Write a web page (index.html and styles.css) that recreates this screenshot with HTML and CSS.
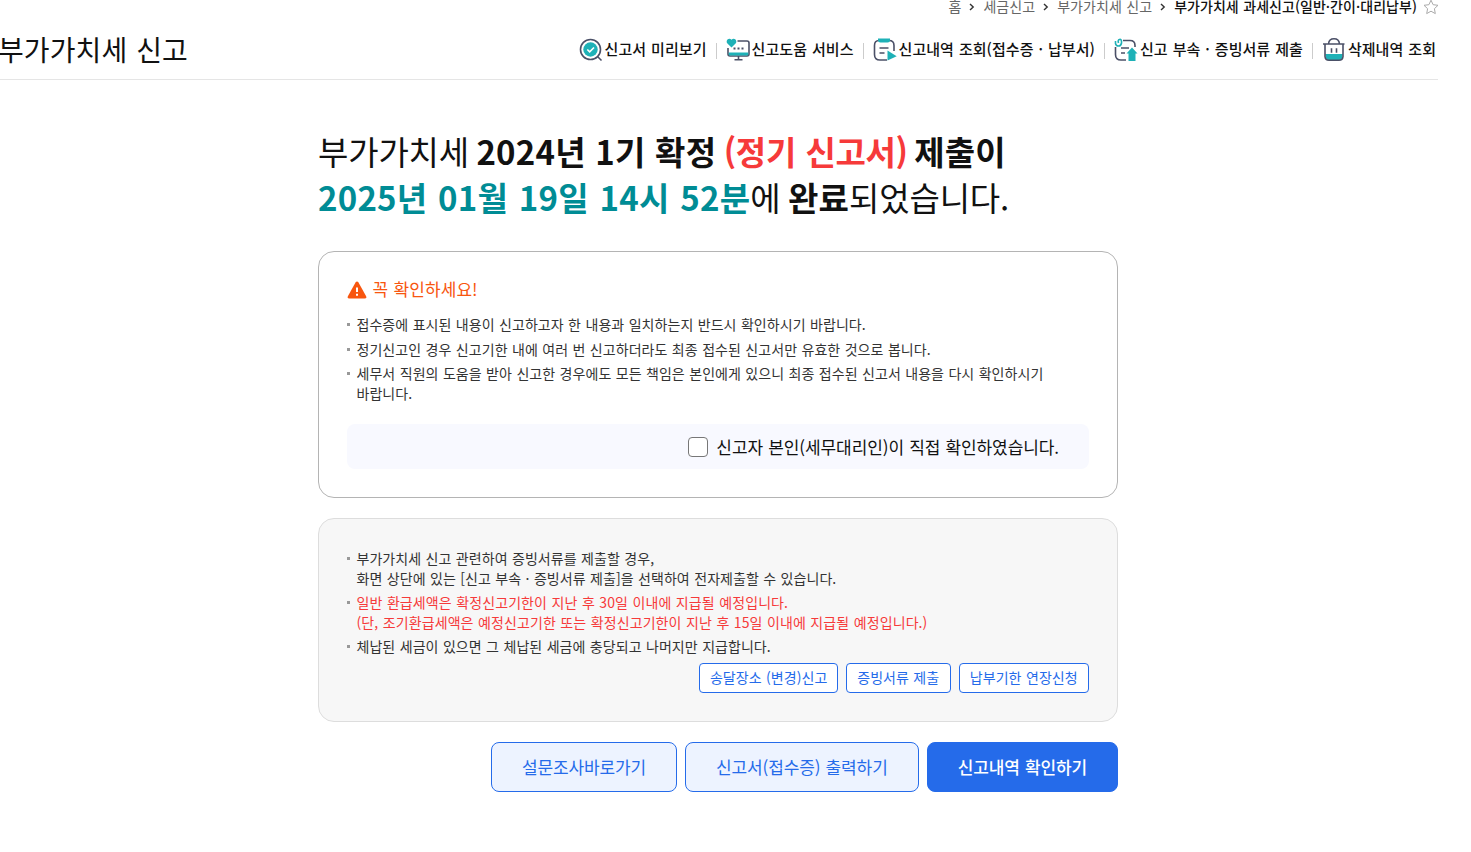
FILE: index.html
```html
<!DOCTYPE html>
<html lang="ko">
<head>
    <meta charset="UTF-8">
    <meta name="viewport" content="width=device-width, initial-scale=1.0">
    <title>부가가치세 신고</title>
    <link rel="stylesheet" href="styles.css">
</head>
<body>
    <header>
        <nav class="breadcrumb">
            <span>홈</span>
            <svg class="chevron" viewBox="0 0 6 8"><path d="M1 1l3.2 3L1 7"/></svg>
            <span>세금신고</span>
            <svg class="chevron" viewBox="0 0 6 8"><path d="M1 1l3.2 3L1 7"/></svg>
            <span>부가가치세 신고</span>
            <svg class="chevron" viewBox="0 0 6 8"><path d="M1 1l3.2 3L1 7"/></svg>
            <strong>부가가치세 과세신고(일반·간이·대리납부)</strong>
            <svg class="star" viewBox="0 0 16 16"><path d="M8 1.2l2.1 4.500 4.900.6-3.600 3.400.9 4.900L8 12.200l-4.300 2.400.9-4.900L1 6.300l4.900-.6z"/></svg>
        </nav>
        <div class="title-bar">
            <h1>부가가치세 신고</h1>
            <ul class="menu">
                <li>
                    <svg viewBox="0 0 24 24">
                        <circle class="line" cx="11.500" cy="11.500" r="10"/>
                        <path class="line" d="M18.500 18.500l4 4"/>
                        <circle class="fill" cx="11.500" cy="11.500" r="7.200"/>
                        <path class="check" d="M8.300 11.500l2.400 2.400 4.300-4.400"/>
                    </svg>
                    <span>신고서 미리보기</span>
                </li>
                <li>
                    <svg viewBox="0 0 24 24">
                        <path class="line" d="M11.500 3H21q2 0 2 2v11q0 2-2 2H4q-2 0-2-2v-6M12.500 18v3.500M8.500 21.700h8"/>
                        <path class="fill" d="M2.700 14.500h19.600v2.500q0 .4-.8.4h-18q-.8 0-.8-.4z"/>
                        <path class="fill" d="M5.500 9.500L1.200 5.200C-.7 2.700 2.800-.9 5.500 1.700 8.200-.9 11.700 2.700 9.800 5.200z"/>
                        <path class="dots" d="M7.500 10.500h2M11.500 10.500h2M15.500 10.500h2"/>
                    </svg>
                    <span>신고도움 서비스</span>
                </li>
                <li>
                    <svg viewBox="0 0 24 24">
                        <path class="line" d="M14 22H7q-5.500 0-5.500-5.500v-9Q1.500 2.500 6 2.500h10q5 0 5 5V13"/>
                        <path class="fill" d="M5 .5h12V2q0 2.500-2.500 2.500h-7Q5 4.500 5 2z"/>
                        <path class="line" d="M6.500 10h9M6.500 15h5"/>
                        <path class="fill" d="M14.500 12.500L23.700 18.300 14.500 22.500z"/>
                    </svg>
                    <span>신고내역 조회(접수증 · 납부서)</span>
                </li>
                <li>
                    <svg viewBox="0 0 24 24">
                        <path class="line" d="M12 22H7q-5.500 0-5.500-5.500V9M9 2.500h7q5 0 5 5V9M7 10h8M7 15h4"/>
                        <path class="clip" d="M1.500 3v2.500Q2 8 4.500 8T7.500 5V3.500Q7.500 1 5.500 1.500T4.500 5"/>
                        <path class="fill" d="M18 9.500L23.500 15.500H21.500V23h-7v-7.500H12.500z"/>
                    </svg>
                    <span>신고 부속 · 증빙서류 제출</span>
                </li>
                <li>
                    <svg viewBox="0 0 24 24">
                        <path class="fill" d="M3.200 16h17.600l-.7 4q-.3 2-2.600 2h-11q-2.300 0-2.600-2z"/>
                        <path class="line" d="M1 6h21.500M6.500 6Q7 .8 12 .8T17.500 6M3 6v12.500Q3.300 22.300 7 22.300h10q3.700 0 4-3.800V6M9.500 10.300v4.500M14.500 10.300v4.500"/>
                    </svg>
                    <span>삭제내역 조회</span>
                </li>
            </ul>
        </div>
    </header>

    <main>
        <h2>
            부가가치세 <b>2024년 1기 확정 <em>(정기 신고서)</em> 제출이</b><br>
            <b class="date">2025년 01월 19일 14시 52분</b>에 <b>완료</b>되었습니다.
        </h2>

        <section class="box">
            <h3>
                <svg viewBox="0 0 20 18">
                    <path class="warn" d="M8.500 1.500Q10-.7 11.500 1.500L19 15q1 2.200-1.300 2.500H2.300Q0 17.200 1 15z"/>
                    <path class="mark" d="M10 6.500v4.500M10 12.700v2"/>
                </svg>
                꼭 확인하세요!
            </h3>
            <ul class="notes">
                <li>접수증에 표시된 내용이 신고하고자 한 내용과 일치하는지 반드시 확인하시기 바랍니다.</li>
                <li>정기신고인 경우 신고기한 내에 여러 번 신고하더라도 최종 접수된 신고서만 유효한 것으로 봅니다.</li>
                <li>세무서 직원의 도움을 받아 신고한 경우에도 모든 책임은 본인에게 있으니 최종 접수된 신고서 내용을 다시 확인하시기<br>바랍니다.</li>
            </ul>
            <label class="confirm">
                <input type="checkbox">
                <span>신고자 본인(세무대리인)이 직접 확인하였습니다.</span>
            </label>
        </section>

        <section class="box gray">
            <ul class="notes">
                <li>부가가치세 신고 관련하여 증빙서류를 제출할 경우,<br>화면 상단에 있는 [신고 부속 · 증빙서류 제출]을 선택하여 전자제출할 수 있습니다.</li>
                <li class="red">일반 환급세액은 확정신고기한이 지난 후 30일 이내에 지급될 예정입니다.<br>(단, 조기환급세액은 예정신고기한 또는 확정신고기한이 지난 후 15일 이내에 지급될 예정입니다.)</li>
                <li>체납된 세금이 있으면 그 체납된 세금에 충당되고 나머지만 지급합니다.</li>
            </ul>
            <div class="small-buttons">
                <button>송달장소 (변경)신고</button>
                <button>증빙서류 제출</button>
                <button>납부기한 연장신청</button>
            </div>
        </section>

        <div class="buttons">
            <button>설문조사바로가기</button>
            <button>신고서(접수증) 출력하기</button>
            <button class="primary">신고내역 확인하기</button>
        </div>
    </main>
</body>
</html>
```

FILE: styles.css
```css
* {
    box-sizing: border-box;
    letter-spacing: 0.004em;
    word-spacing: 0.03em;
}
body {
    font-family: "Noto Sans CJK KR", sans-serif;
    font-size: 14px;
    color: #111;
    background-color: #fff;
    margin: 0;
    height: 852px;
    overflow: hidden;
}
ul {
    list-style-type: none;
    margin: 0;
    padding: 0;
}
h1, h2, h3 {
    margin: 0;
    font-weight: 400;
}
button {
    font: inherit;
    white-space: nowrap;
    padding: 0;
}

/* Top area */
header {
    display: flow-root;
    width: 1438px;
    height: 80px;
    border-bottom: 1px solid #e5e5e5;
}
.breadcrumb {
    display: flex;
    justify-content: flex-end;
    align-items: center;
    height: 20px;
    margin-top: -4px;
    color: #666;
    line-height: 20px;
}
.breadcrumb strong {
    color: #111;
    font-weight: 500;
}
.chevron {
    width: 6px;
    height: 8px;
    margin: 2px 8px 0;
    fill: none;
    stroke: #333;
    stroke-width: 1.4;
}
.star {
    width: 16px;
    height: 16px;
    margin: 2px -1px 0 6px;
    fill: none;
    stroke: #aaa;
}
.title-bar {
    display: flex;
    justify-content: space-between;
    align-items: center;
    height: 66px;
    padding-right: 2px;
}
h1 {
    font-size: 28px;
    line-height: 40px;
    margin-left: -2px;
}
.menu {
    display: flex;
    font-size: 15px;
    font-weight: 500;
    line-height: 24px;
}
.menu li {
    display: flex;
    align-items: center;
    gap: 2px;
}
.menu li + li::before {
    content: "";
    width: 1px;
    height: 16px;
    margin: 3px 7px 0 9px;
    background-color: #ccc;
}
.menu span {
    word-spacing: 0.045em;
}
.menu svg {
    width: 24px;
    height: 24px;
    margin-top: 2px;
}
.line, .check, .dots, .clip {
    fill: none;
    stroke: #4b5067;
    stroke-width: 1.6;
}
.fill {
    fill: #1eb1b7;
}
.check {
    stroke: #fff;
}
.dots {
    stroke-width: 2;
}
.clip {
    stroke: #1eb1b7;
}

/* Result */
main {
    width: 800px;
    margin-left: 318px;
    padding-top: 48px;
}
h2 {
    font-size: 33px;
    line-height: 46px;
    letter-spacing: -0.005em;
    word-spacing: -0.05em;
    white-space: nowrap;
}
h2 b {
    letter-spacing: 0.007em;
    word-spacing: 0;
}
h2 em {
    color: #f63a3a;
    font-style: normal;
    letter-spacing: -0.01em;
    word-spacing: 0.02em;
    margin: 0 -3px 0 -2px;
}
h2 .date {
    color: #008c95;
    word-spacing: 0.038em;
}
.box {
    height: 247px;
    margin-top: 31px;
    padding: 26px 28px;
    border: 1px solid #b4b4b4;
    border-radius: 16px;
}
.gray {
    height: 204px;
    margin-top: 20px;
    padding-top: 29px;
    border-color: #ddd;
    background-color: #f7f7f7;
}
h3 {
    display: flex;
    align-items: center;
    gap: 6px;
    color: #f8560f;
    font-size: 17px;
    line-height: 22px;
    margin-bottom: 14px;
}
h3 svg {
    width: 20px;
    height: 18px;
    margin-top: 1px;
    margin-left: -0.5px;
}
.warn {
    fill: #f8560f;
}
.mark {
    stroke: #fff;
    stroke-width: 2;
}
.notes {
    color: #333;
    line-height: 20px;
    white-space: nowrap;
}
.notes li {
    position: relative;
    padding-left: 9.5px;
    margin-bottom: 4px;
}
.box:not(.gray) .notes li:first-child {
    margin-bottom: 5px;
}
.notes li::before {
    content: "";
    position: absolute;
    left: 0;
    top: 9px;
    width: 3px;
    height: 3px;
    background-color: #999;
}
.notes .red {
    color: #f63a3a;
    letter-spacing: 0.007em;
}
.confirm {
    display: flex;
    justify-content: flex-end;
    align-items: center;
    gap: 8px;
    height: 45px;
    margin-top: 21px;
    padding-right: 30px;
    border-radius: 8px;
    background-color: #f8f9ff;
    font-size: 17px;
}
.confirm span {
    letter-spacing: -0.005em;
}
.confirm input {
    appearance: none;
    width: 20px;
    height: 20px;
    margin: 0;
    border: 1px solid #777;
    border-radius: 4px;
    background-color: #fff;
}
.small-buttons, .buttons {
    display: flex;
    justify-content: flex-end;
    gap: 8px;
}
.small-buttons {
    margin-top: 7px;
}
.small-buttons button {
    height: 30px;
    padding: 0 10.3px 2px;
    color: #256bea;
    border: 1px solid #256bea;
    border-radius: 4px;
    background-color: #fff;
}
.small-buttons button:first-child {
    padding: 0 9.5px 2px;
}
.buttons {
    margin-top: 20px;
    font-size: 17px;
}
.buttons button {
    height: 50px;
    padding: 0 30px 2px;
    letter-spacing: -0.007em;
    color: #256bea;
    border: 1px solid #256bea;
    border-radius: 8px;
    background-color: #edf3ff;
}
.buttons .primary {
    color: #fff;
    font-weight: 500;
    background-color: #256bea;
}
```
